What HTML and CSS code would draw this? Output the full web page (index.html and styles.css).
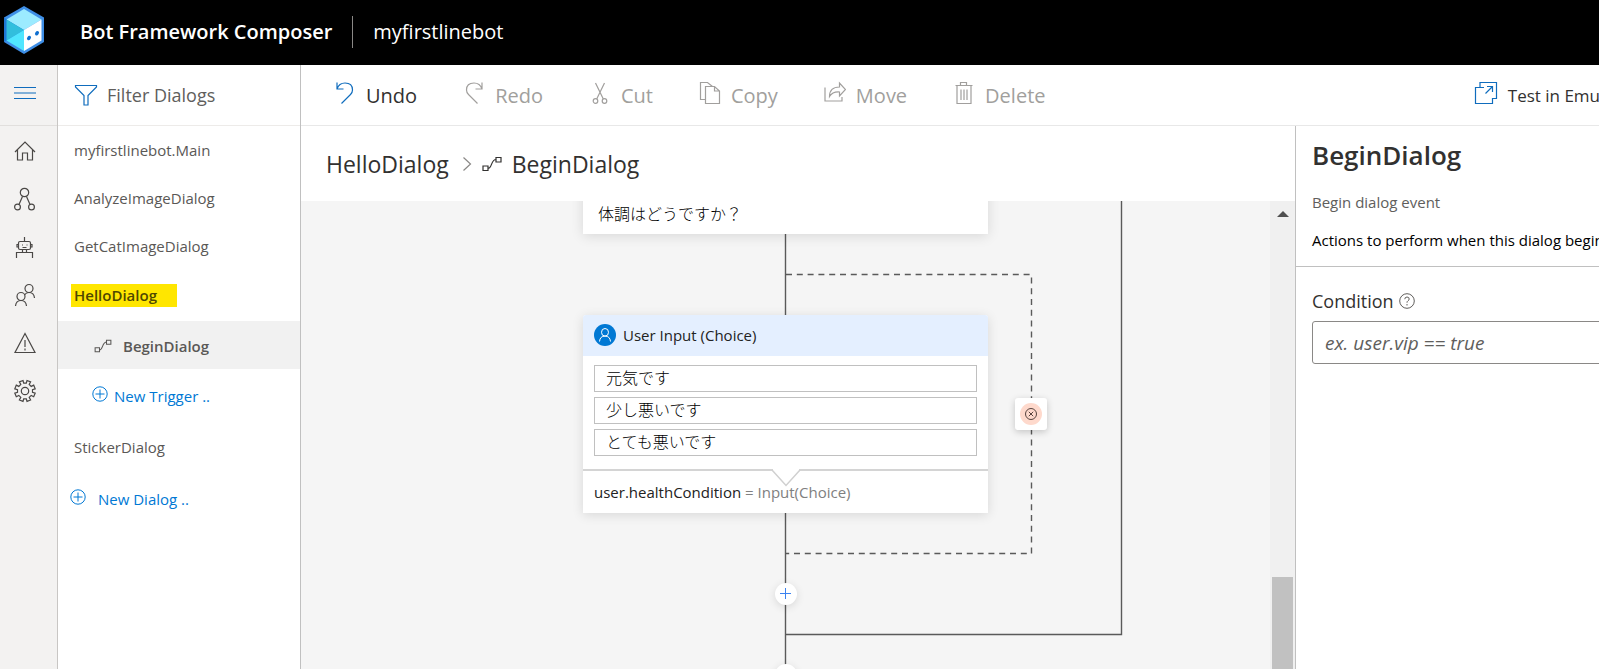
FILE: index.html
```html
<!DOCTYPE html>
<html lang="en">
<head>
<meta charset="utf-8">
<title>Bot Framework Composer</title>
<link rel="stylesheet" href="styles.css">
</head>
<body>
<svg class="defs" aria-hidden="true">
  <symbol id="flow" viewBox="0 0 20 16">
    <path d="M1 10h5v4.500h-5zM14 1.500h5v4.500h-5zM6 12.500c4 0 3-9 8-9"/>
  </symbol>
  <symbol id="circle-plus" viewBox="0 0 16 16">
    <circle cx="8" cy="8" r="7.200"/><path d="M8 3.500v9M3.500 8h9"/>
  </symbol>
</svg>
<div class="app">
  <header class="header">
    <svg class="logo" viewBox="0 0 42 48" aria-hidden="true">
      <path fill="#3e8ee6" d="M21 0l20 11.500v24.500L21 48 1 36V11.500z"/>
      <path fill="#1f77d6" d="M1 11.500L21 24 1 36z"/>
      <path fill="#9cebff" d="M21 3l17.500 10.500L21 24 3.500 13.500z"/>
      <path fill="#32bedd" d="M3.500 13.500L21 24 3.500 34.500z"/>
      <path fill="#50e6ff" d="M3.500 34.500L21 24v21z"/>
      <path fill="#fff" d="M21 24l17.500-10.500v21L21 45z"/>
      <ellipse cx="26" cy="32" rx="1.800" ry="2.400" fill="#0f6fd0" transform="rotate(35 26 32)"/>
      <ellipse cx="34" cy="27.300" rx="1.800" ry="2.400" fill="#0f6fd0" transform="rotate(35 34 27.300)"/>
    </svg>
    <h1 class="product">Bot Framework Composer</h1>
    <span class="project">myfirstlinebot</span>
  </header>
  <div class="body">
    <nav class="rail" aria-label="Main">
      <button class="rail-toggle" type="button" aria-label="Expand menu">
        <svg class="icon" width="24" height="24" viewBox="0 0 24 24"><path d="M1 6.500h22M1 12h22M1 17.500h22"/></svg>
      </button>
      <a class="rail-link" href="#home" aria-label="Home"><svg class="icon" width="24" height="24" viewBox="0 0 24 24"><path d="M2 13L12 3l10 10M4.500 11v10h5v-7h5v7h5V11"/></svg></a>
      <a class="rail-link" href="#flow" aria-label="Design flow"><svg class="icon" width="24" height="24" viewBox="0 0 24 24"><circle cx="11.500" cy="5.500" r="4.200"/><circle cx="4.500" cy="20" r="2.900"/><circle cx="18.500" cy="20" r="2.900"/><path d="M9.500 9.500L6 17.500M13.500 9.500L17 17.500"/></svg></a>
      <a class="rail-link" href="#bots" aria-label="Bot says"><svg class="icon" width="24" height="24" viewBox="0 0 24 24"><rect x="5.500" y="6.500" width="12" height="8" rx="1.500"/><path d="M11.500 2v4.500M5 9.500H4v2.500h1M18 9.500h1v2.500h-1M9.500 14.500v3M13.500 14.500v3M3.500 23v-5.500h16V23M9 10h1M13.500 10h1M9.500 12.500h4"/></svg></a>
      <a class="rail-link" href="#users" aria-label="User says"><svg class="icon" width="24" height="24" viewBox="0 0 24 24"><circle cx="16" cy="5.500" r="4"/><circle cx="8" cy="13.500" r="4"/><path d="M2.500 23q.5-5.500 5.500-5.500t5.500 5.500M11.500 12q1.500-2.500 4.500-2.500 5 0 5.500 5.500"/></svg></a>
      <a class="rail-link" href="#notifications" aria-label="Notifications"><svg class="icon" width="24" height="24" viewBox="0 0 24 24"><path d="M12 2.500L22 21.500H2zM12 9v7M12 17.500v2"/></svg></a>
      <a class="rail-link" href="#settings" aria-label="Settings"><svg class="icon" width="24" height="24" viewBox="0 0 24 24"><circle cx="12" cy="12" r="3.700"/><path d="M10 1.500l.7 2.700h2.600L14 1.500l3.600 1.400-1.400 2.500 2 2 2.500-1.300 1.500 3.700-2.700.8v2.700l2.700.8-1.500 3.600-2.500-1.300-2 1.900 1.400 2.600L14 22.500l-.7-2.700h-2.600L10 22.500l-3.600-1.600 1.400-2.600-2-1.900-2.500 1.300-1.500-3.600 2.700-.8v-2.700L1.800 9.800l1.500-3.700 2.500 1.300 2-2-1.400-2.500z"/></svg></a>
    </nav>
    <aside class="sidebar">
      <label class="filter">
        <svg class="icon blue" width="24" height="24" viewBox="0 0 24 24"><path d="M1.500 2.500h21v1.500L14 12.500V22h-4v-9.500L1.500 4z"/></svg>
        <input class="filter-input" type="text" placeholder="Filter Dialogs" aria-label="Filter Dialogs">
      </label>
      <a class="row" href="#main">myfirstlinebot.Main</a>
      <a class="row" href="#analyze">AnalyzeImageDialog</a>
      <a class="row" href="#getcat">GetCatImageDialog</a>
      <a class="row row-current" href="#hello"><span class="marker">HelloDialog</span></a>
      <a class="row row-trigger" href="#begin"><svg class="icon" width="18" height="14"><use href="#flow"/></svg>BeginDialog</a>
      <button class="row row-add row-add-trigger" type="button"><svg class="icon" width="16" height="16"><use href="#circle-plus"/></svg>New Trigger ..</button>
      <a class="row" href="#sticker">StickerDialog</a>
      <button class="row row-add row-add-dialog" type="button"><svg class="icon" width="16" height="16"><use href="#circle-plus"/></svg>New Dialog ..</button>
    </aside>
    <main class="main">
      <div class="toolbar">
        <button class="tool tool-active" type="button"><svg class="icon" width="22" height="24" viewBox="0 0 22 24"><path d="M3 1.500V8h6.500M3 8q2-6 8-6 7.500 0 7.500 7 0 2.500-2 4.500L7.500 22.500"/></svg>Undo</button>
        <button class="tool" type="button" disabled><svg class="icon" width="22" height="24" viewBox="0 0 22 24"><path d="M19 1.500V8h-6.500M19 8q-2-6-8-6-7.500 0-7.500 7 0 2.500 2 4.500l9 9"/></svg>Redo</button>
        <button class="tool" type="button" disabled><svg class="icon" width="22" height="24" viewBox="0 0 22 24"><circle cx="6.500" cy="20" r="2.300"/><circle cx="15.500" cy="20" r="2.300"/><path d="M6.500 2l7.800 16M15.500 2L7.700 18"/></svg>Cut</button>
        <button class="tool" type="button" disabled><svg class="icon" width="22" height="24" viewBox="0 0 22 24"><path d="M6.500 18.500H1.500v-17h7l5 4M6.500 5.500h9l5 4.500v12.500h-14zM15.500 5.500V10h5"/></svg>Copy</button>
        <button class="tool" type="button" disabled><svg class="icon" width="22" height="24" viewBox="0 0 22 24"><path d="M1 6.500v13.500h17v-4M5.500 15.500q0-9.500 10-9.500V2l6 6.500-6 6.500v-4q-7-.5-10 4.500z"/></svg>Move</button>
        <button class="tool" type="button" disabled><svg class="icon" width="22" height="24" viewBox="0 0 22 24"><path d="M2.500 4.500h17M7.500 4.500v-3h6v3M4 4.500v18h14v-18M8 8.500v10.500M11 8.500v10.500M14 8.500v10.500"/></svg>Delete</button>
        <button class="tool tool-active tool-test" type="button"><svg class="icon" width="24" height="24" viewBox="0 0 24 24"><path d="M10 6.500H1.500v16h17v-5.500M6 6.500v-5h16.500v16h-4M11.500 12.500l7-7M13 5.500h5.500V11"/></svg>Test in Emulator</button>
      </div>
      <div class="workspace">
        <section class="editor">
          <nav class="crumbs" aria-label="Breadcrumb">
            <a class="crumb" href="#hello">HelloDialog</a>
            <svg class="icon crumb-sep" width="10" height="16" viewBox="0 0 10 16"><path d="M1.500 1.500L8.500 8l-7 6.500"/></svg>
            <svg class="icon" width="20" height="16"><use href="#flow"/></svg>
            <a class="crumb" href="#begin">BeginDialog</a>
          </nav>
          <div class="canvas">
            <div class="flowchart">
              <svg class="edges" aria-hidden="true">
                <path class="edge" d="M484.500 0V468M820.500 0V433.500H484.500"/>
                <path class="edge edge-dashed" d="M485 73.500H730.500V352.500H485"/>
              </svg>
              <div class="node node-prompt">体調はどうですか？</div>
              <article class="node node-choice">
                <h2 class="node-head">
                  <svg class="avatar" width="22" height="22" viewBox="0 0 22 22"><circle cx="11" cy="11" r="11" fill="#0078d4"/><path fill="none" stroke="#fff" d="M11 4.500a3.500 3.800 0 1 1 0 7.600a3.500 3.800 0 1 1 0-7.600M5.500 17.500q.5-5.400 5.500-5.400t5.500 5.400"/></svg>
                  User Input (Choice)
                </h2>
                <ul class="choices">
                  <li class="choice">元気です</li>
                  <li class="choice">少し悪いです</li>
                  <li class="choice">とても悪いです</li>
                </ul>
                <p class="result"><svg class="notch" width="30" height="18" viewBox="0 0 30 18"><path fill="#fff" d="M2 0h26v2L15 16.500 2 2z"/><path fill="none" stroke="#d0d0d0" stroke-width="1.500" d="M1 1L15 16.500 29 1"/></svg>user.healthCondition <span class="result-kind">= Input(Choice)</span></p>
              </article>
              <button class="invalid" type="button" aria-label="Invalid prompt"><span class="invalid-disc"><svg width="12" height="12" viewBox="0 0 12 12"><path fill="none" stroke="#57433e" d="M6 .5a5.500 5.500 0 1 1 0 11a5.500 5.500 0 1 1 0-11M3.800 3.800l4.400 4.400M8.200 3.800L3.800 8.200"/></svg></span></button>
              <button class="add add-first" type="button" aria-label="Add action"><svg width="12" height="12" viewBox="0 0 12 12"><path stroke="#3b82f0" d="M5.500 0v11M0 5.500h11"/></svg></button>
              <button class="add add-second" type="button" aria-label="Add action"><svg width="12" height="12" viewBox="0 0 12 12"><path stroke="#3b82f0" d="M5.500 0v11M0 5.500h11"/></svg></button>
            </div>
            <div class="scrollbar" aria-hidden="true">
              <span class="scroll-up"></span>
              <span class="scroll-thumb"></span>
            </div>
          </div>
        </section>
        <aside class="properties">
          <div class="intro">
            <h2 class="title">BeginDialog</h2>
            <p class="subtitle">Begin dialog event</p>
            <p class="summary">Actions to perform when this dialog begins.</p>
          </div>
          <div class="field">
            <label class="field-label" for="condition">Condition
              <svg class="help" width="16" height="16" viewBox="0 0 16 16"><circle cx="8" cy="8" r="7.300"/><path d="M5.800 6.200q0-2.200 2.200-2.200t2.200 2q0 1-1.200 1.800T8 9.700M8 11v1.500"/></svg>
            </label>
            <input class="field-input" id="condition" type="text" placeholder="ex. user.vip == true">
          </div>
        </aside>
      </div>
    </main>
  </div>
</div>
</body>
</html>
```
FILE: styles.css
```css
* { box-sizing: border-box; }

body {
  margin: 0;
  overflow: hidden;
  font-family: "Open Sans", "Noto Sans CJK JP", sans-serif;
  font-size: 15px;
  color: #323130;
  background: #fff;
}

h1, h2, p, ul { margin: 0; padding: 0; }
a { color: inherit; text-decoration: none; }
button, input { font: inherit; color: inherit; }
button { padding: 0; border: 0; background: none; }

.defs { display: none; }
.icon { flex: none; fill: none; stroke: currentColor; stroke-width: 1.2; }
.blue { color: #0f6cbd; }

/* The toolbar and the property panel run past the right edge of the window. */
.app {
  display: flex;
  flex-direction: column;
  width: calc(100% + 80px);
  height: 100vh;
}

.header {
  display: flex;
  align-items: center;
  flex: none;
  height: 65px;
  padding: 0 0 2px 3px;
  background: #000;
  color: #fff;
}
.logo { width: 42px; height: 48px; margin-bottom: 3px; }
.product {
  margin-left: 35px;
  padding-right: 20px;
  border-right: 1px solid #8a8886;
  font-size: 20px;
  font-weight: 600;
  line-height: 32px;
}
.project { margin-left: 20px; font-size: 20px; }

.body { display: flex; flex: 1; min-height: 0; }

.rail {
  display: flex;
  flex-direction: column;
  flex: none;
  width: 58px;
  border-right: 1px solid #c8c6c4;
  background: #f3f2f1;
  color: #4a4846;
}
.rail-toggle {
  height: 61px;
  margin-bottom: 1px;
  padding: 0 8px 0 0;
  border-bottom: 1px solid #e1dfdd;
  color: #0f6cbd;
}
.rail-link {
  display: flex;
  align-items: center;
  justify-content: center;
  height: 48px;
  padding-right: 8px;
}

.sidebar {
  display: flex;
  flex-direction: column;
  flex: none;
  width: 243px;
  border-right: 1px solid #c0c0c0;
  color: #5a5856;
}
.filter {
  display: flex;
  align-items: center;
  gap: 9px;
  flex: none;
  height: 61px;
  padding: 0 16px;
  border-bottom: 1px solid #edebe9;
}
.filter-input {
  width: 100%;
  min-width: 0;
  padding: 0;
  border: 0;
  outline: 0;
  background: none;
  font-size: 18px;
}
.filter-input::placeholder { color: #605e5c; opacity: 1; }
.row {
  display: flex;
  align-items: center;
  flex: none;
  height: 48px;
  padding-left: 16px;
}
.row-current { height: 51px; padding-left: 13px; font-weight: 600; }
.marker {
  padding: 0 20px 0 3px;
  background: #ffe600;
  color: #4f4800;
  line-height: 23px;
}
.row-trigger {
  gap: 11px;
  padding: 2px 0 0 36px;
  background: #f1f1f1;
  font-weight: 600;
}
.row-add { color: #0078d4; }
.row-add .icon { margin-bottom: 5px; stroke-width: 1; }
.row-add-trigger { height: 54px; gap: 6px; padding-left: 34px; }
.row-add-dialog { height: 56px; gap: 12px; padding-left: 12px; }

.main { display: flex; flex-direction: column; flex: 1; min-width: 0; }

.toolbar {
  display: flex;
  align-items: center;
  gap: 46px;
  flex: none;
  height: 61px;
  padding: 0 42px 0 33px;
  border-bottom: 1px solid #e8e8e8;
}
.tool {
  display: flex;
  align-items: center;
  gap: 10px;
  flex: none;
  color: #a19f9d;
  font-size: 20px;
}
.tool .icon { margin-bottom: 4px; }
.tool-active { color: #323130; }
.tool-active .icon { color: #0f6cbd; }
.tool-test { margin-left: auto; font-size: 17px; }

.workspace { display: flex; flex: 1; min-height: 0; }
.editor { display: flex; flex-direction: column; flex: 1; min-width: 0; }

.crumbs {
  display: flex;
  align-items: center;
  gap: 10px;
  flex: none;
  height: 75px;
  padding-left: 25px;
  font-size: 23px;
}
.crumb-sep { color: #8a8886; margin-left: 3px; }

.canvas { display: flex; flex: 1; min-height: 0; background: #f5f5f5; color: #222; }
.flowchart { position: relative; flex: 1; min-width: 0; overflow: hidden; }
.edges { position: absolute; inset: 0; width: 100%; height: 100%; }
.edge { fill: none; stroke: #5a5a5a; stroke-width: 1.4; }
.edge-dashed { stroke-dasharray: 6 4.8; }

.node {
  position: absolute;
  left: 282px;
  width: 405px;
  background: #fff;
  box-shadow: 0 2px 12px rgba(0, 0, 0, 0.12);
}
.node-prompt {
  top: -40px;
  height: 73px;
  padding: 41px 15px 0;
  font-size: 16px;
  font-weight: 300;
  line-height: 24px;
  color: #000;
}
.node-choice { top: 114px; border-radius: 3px 3px 0 0; }
.node-head {
  display: flex;
  align-items: center;
  gap: 7px;
  height: 41px;
  padding: 0 0 1px 11px;
  border-radius: 3px 3px 0 0;
  background: #e4efff;
  font-size: 15px;
  font-weight: 400;
}
.choices {
  display: flex;
  flex-direction: column;
  gap: 5px;
  padding: 9px 11px 13px;
  list-style: none;
}
.choice {
  height: 27px;
  padding-left: 11px;
  border: 1px solid #c0c0c0;
  font-size: 16px;
  font-weight: 300;
  line-height: 24px;
  color: #000;
}
.result {
  position: relative;
  height: 44px;
  padding: 9px 11px;
  border-top: 2px solid #d4d4d4;
  font-size: 15px;
  line-height: 24px;
}
.result-kind { color: #808080; }
.notch { position: absolute; top: -2px; left: 188px; }

.invalid {
  position: absolute;
  top: 197px;
  left: 714px;
  display: grid;
  place-items: center;
  width: 32px;
  height: 32px;
  border-radius: 3px;
  background: #fff;
  box-shadow: 0 2px 7px rgba(0, 0, 0, 0.2);
}
.invalid-disc {
  display: grid;
  place-items: center;
  width: 22px;
  height: 22px;
  border-radius: 50%;
  background: #fed9cc;
}
.add {
  position: absolute;
  left: 474px;
  display: grid;
  place-items: center;
  width: 22px;
  height: 22px;
  border-radius: 50%;
  background: #fff;
  box-shadow: 0 2px 8px rgba(0, 0, 0, 0.12);
}
.add-first { top: 382px; }
.add-second { top: 463px; }

.scrollbar {
  display: flex;
  flex-direction: column;
  align-items: center;
  justify-content: space-between;
  flex: none;
  width: 25px;
  padding-top: 10px;
  background: #f0f0f0;
}
.scroll-up {
  border: 6px solid transparent;
  border-top: 0;
  border-bottom-color: #505050;
}
.scroll-thumb { width: 21px; height: 92px; background: #c1c1c1; }

.properties {
  flex: none;
  width: 384px;
  border-left: 1px solid #c0c0c0;
}
.intro { height: 141px; padding: 11px 16px 0; border-bottom: 1px solid #c0c0c0; }
.title { font-size: 26px; font-weight: 600; line-height: 36px; }
.subtitle { margin-top: 17px; color: #605e5c; line-height: 24px; }
.summary { margin-top: 14px; color: #000; line-height: 24px; white-space: nowrap; }
.field { display: flex; flex-direction: column; gap: 7px; padding: 21px 16px 0; }
.field-label {
  display: flex;
  align-items: center;
  gap: 5px;
  font-size: 18px;
  line-height: 26px;
}
.help { fill: none; stroke: #605e5c; }
.field-input {
  height: 43px;
  padding: 0 12px;
  border: 1px solid #8a8886;
  border-radius: 3px;
  font-size: 19px;
}
.field-input::placeholder { color: #605e5c; font-style: italic; opacity: 1; }
```
